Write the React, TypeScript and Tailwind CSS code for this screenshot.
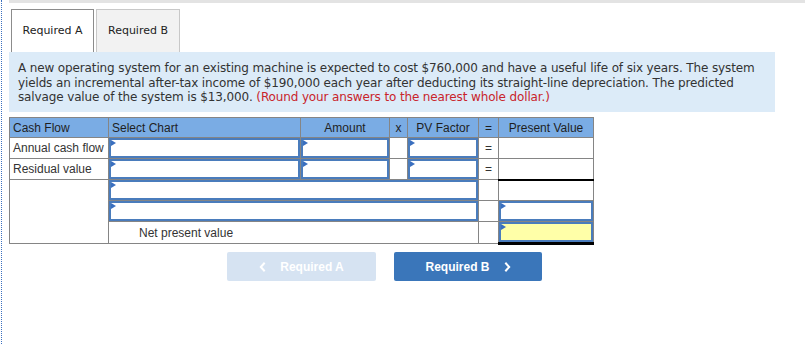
import React from 'react';

const flag = (
  <span className="absolute left-0 top-0 w-0 h-0 border-t-[3px] border-b-[3px] border-l-[5px] border-t-transparent border-b-transparent border-l-[#3a6fbf]" />
);

function Field({ yellow = false }: { yellow?: boolean }) {
  return (
    <div className={`relative h-[20px] w-full border-2 border-[#4a7cbc] ${yellow ? 'bg-[#ffffa8]' : 'bg-white'}`}>
      {flag}
    </div>
  );
}

function Chevron({ dir }: { dir: 'left' | 'right' }) {
  return (
    <svg width="7" height="10" viewBox="0 0 7 10" fill="none" stroke="currentColor" strokeWidth="2" strokeLinecap="square">
      {dir === 'left' ? <path d="M5 1.5 L1.8 5 L5 8.5" /> : <path d="M2 1.5 L5.2 5 L2 8.5" />}
    </svg>
  );
}

export default function App() {
  const cell = 'border border-[#858585] p-0 h-[21px]';
  const head = 'border border-[#858585] h-[20px] px-[3px] font-normal text-[#1f1f1f]';

  return (
    <div className="w-[804px] h-[344px] ml-[1px] border-l border-dotted border-[#3a70c0] bg-white pl-[7px] overflow-hidden">
      <div className="h-[3px] bg-[#e3e3e3]" />

      {/* tabs */}
      <div className="flex mt-[6px] ml-[2px] gap-[2px] text-[11px] text-[#222]" style={{ fontFamily: '"DejaVu Sans", Verdana, sans-serif' }}>
        <div className="w-[83px] h-[43px] flex items-center justify-center border border-b-0 border-[#8c8c8c] bg-white">Required A</div>
        <div className="w-[84px] h-[43px] flex items-center justify-center border border-b-0 border-[#c8c8c8] bg-[#f2f2f2]">Required B</div>
      </div>

      {/* question text */}
      <div
        className="w-[766px] h-[60px] bg-[#dcebf8] pl-[9px] pr-[4px] pt-[9px] text-[12px] leading-[14.5px] tracking-[-0.13px] text-[#333] whitespace-nowrap"
        style={{ fontFamily: '"DejaVu Sans", Verdana, sans-serif' }}
      >
        A new operating system for an existing machine is expected to cost $760,000 and have a useful life of six years. The system
        <br />
        yields an incremental after-tax income of $190,000 each year after deducting its straight-line depreciation. The predicted
        <br />
        salvage value of the system is $13,000.{' '}
        <span className="text-[#c9242b]">(Round your answers to the nearest whole dollar.)</span>
      </div>

      {/* table */}
      <table
        className="mt-[5px] w-[584px] table-fixed border-collapse text-[12px] text-[#333]"
        style={{ fontFamily: '"Liberation Sans", Arial, sans-serif' }}
      >
        <colgroup>
          <col className="w-[99px]" />
          <col className="w-[192px]" />
          <col className="w-[89px]" />
          <col className="w-[18px]" />
          <col className="w-[71px]" />
          <col className="w-[20px]" />
          <col className="w-[95px]" />
        </colgroup>
        <thead>
          <tr className="bg-[#7aace4]">
            <th className={`${head} text-left`}>Cash Flow</th>
            <th className={`${head} text-left`}>Select Chart</th>
            <th className={`${head} text-center`}>Amount</th>
            <th className={`${head} text-center px-0`}>x</th>
            <th className={`${head} text-center`}>PV Factor</th>
            <th className={`${head} text-center px-0`}>=</th>
            <th className={`${head} text-center`}>Present Value</th>
          </tr>
        </thead>
        <tbody>
          {['Annual cash flow', 'Residual value'].map((label) => (
            <tr key={label}>
              <td className={`${cell} px-[3px] whitespace-nowrap`}>{label}</td>
              <td className={cell}><Field /></td>
              <td className={cell}><Field /></td>
              <td className={cell} />
              <td className={cell}><Field /></td>
              <td className={`${cell} text-center`}>=</td>
              <td className={cell} />
            </tr>
          ))}
          <tr>
            <td className={cell} rowSpan={3} />
            <td className={cell} colSpan={4}><Field /></td>
            <td className={cell} />
            <td className={`${cell} border-t-2 border-t-black`} />
          </tr>
          <tr>
            <td className={cell} colSpan={4}><Field /></td>
            <td className={cell} />
            <td className={cell}><Field /></td>
          </tr>
          <tr>
            <td className={`${cell} pl-[30px]`} colSpan={4}>Net present value</td>
            <td className={cell} />
            <td className={`${cell} border-b-[3px] border-b-black`}><Field yellow /></td>
          </tr>
        </tbody>
      </table>

      {/* nav buttons */}
      <div
        className="flex gap-[18px] mt-[7px] ml-[218px] text-[12px] font-bold text-white"
        style={{ fontFamily: '"Liberation Sans", Arial, sans-serif' }}
      >
        <button className="w-[149px] h-[29px] rounded-[2px] bg-[#d6e3f2] flex items-center justify-center gap-[14px]">
          <Chevron dir="left" /> Required A
        </button>
        <button className="w-[148px] h-[29px] rounded-[2px] bg-[#3a76ba] flex items-center justify-center gap-[14px]">
          Required B <Chevron dir="right" />
        </button>
      </div>
    </div>
  );
}
